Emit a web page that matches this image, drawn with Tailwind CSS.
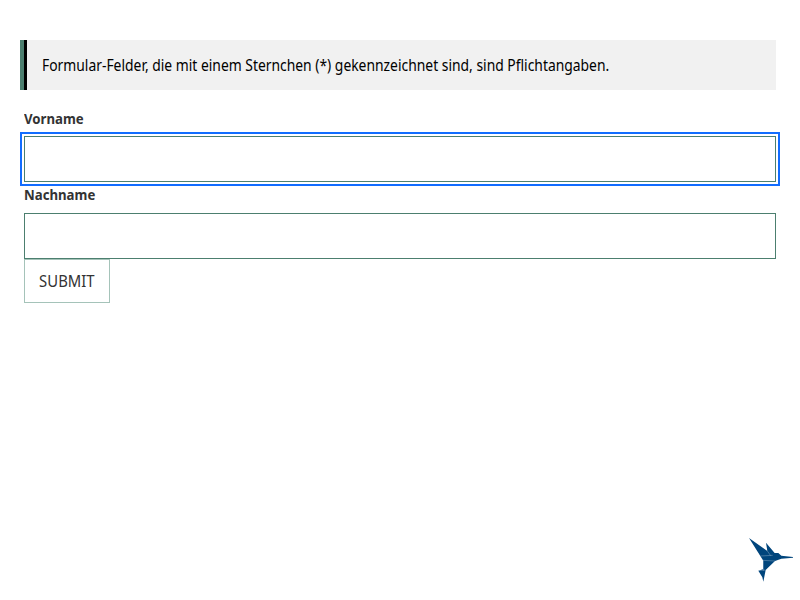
<!DOCTYPE html>
<html lang="de">
<head>
<meta charset="utf-8">
<title>Formular</title>
<script src="https://cdn.jsdelivr.net/npm/@tailwindcss/browser@4"></script>
</head>
<body class="h-[600px] overflow-hidden bg-white px-6 pt-10 font-['Noto_Sans',sans-serif]">
<main class="flex flex-col items-start">
  <div class="-ml-1 flex h-[50px] w-[756px] items-center border-l-4 border-[#4c7f6f] bg-[#f1f1f1]">
    <span class="h-full w-[3px] bg-black"></span>
    <p class="ml-[15px] origin-left scale-x-[0.867] whitespace-nowrap text-[16px] leading-6 text-black">Formular-Felder, die mit einem Sternchen (*) gekennzeichnet sind, sind Pflichtangaben.</p>
  </div>
  <form class="mt-4 flex w-full flex-col items-start">
    <label for="vorname" class="h-[30px] origin-left scale-x-[0.88] text-[15px] leading-6 font-bold text-[#333]">Vorname</label>
    <input id="vorname" class="h-[46px] w-full border border-[#4c7f6f] bg-white px-3 outline-2 outline-offset-2 outline-[#126dff]">
    <label for="nachname" class="h-[31px] origin-left scale-x-[0.88] text-[15px] leading-6 font-bold text-[#333]">Nachname</label>
    <input id="nachname" class="h-[46px] w-full border border-[#4c7f6f] bg-white px-3 outline-none">
    <button type="button" class="flex h-11 w-[86px] items-center justify-center border border-[#a5c3b9] bg-white text-[16px] text-[#333]"><span class="scale-x-[0.93]">SUBMIT</span></button>
  </form>
</main>
<svg class="fixed right-0 bottom-[10px] h-[60px] w-[60px]" viewBox="0 0 180 180" fill="#00457c">
  <path d="M27 24L82 63L78 38L104 69L115 69L124 77L159 81V83L124 86L105 93L77 120L70 155L67 142L55 122L69 118V91L61 78Z"/>
  <path d="M61 78L98 76M82 63L92 77M68 91L105 93M70.500 91V122M56 122L76 120" fill="none" stroke="#a9c0d3" stroke-width="1.2"/>
</svg>
</body>
</html>
